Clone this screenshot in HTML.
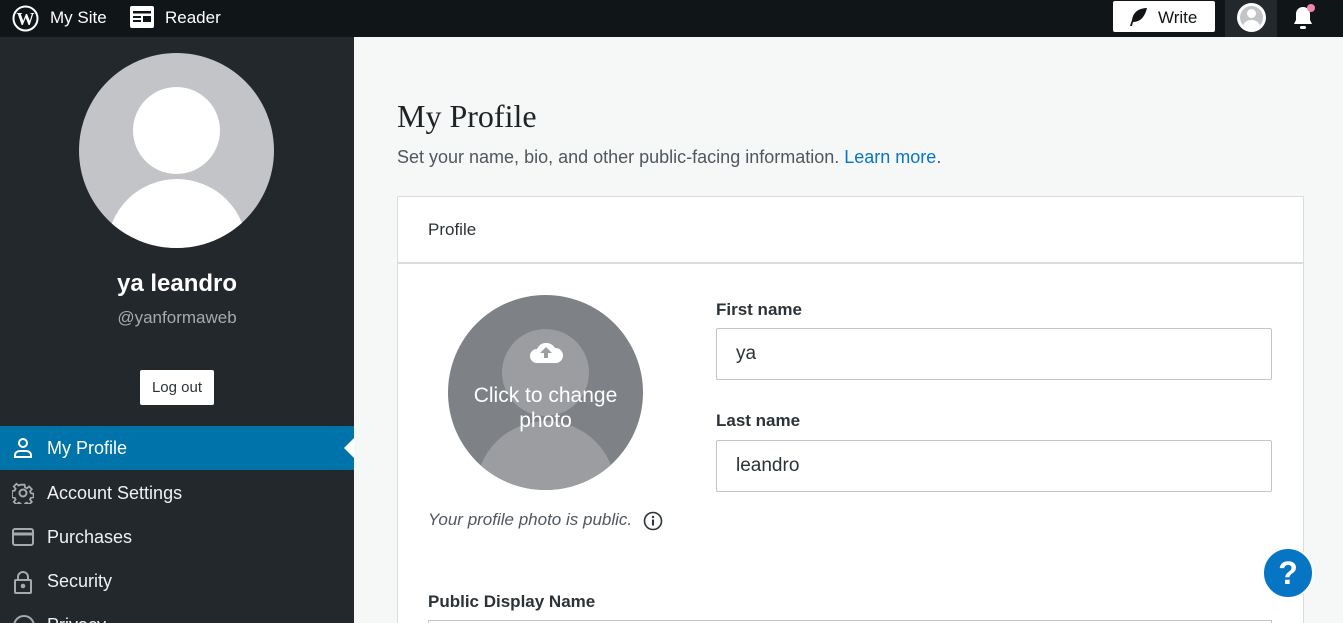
<!DOCTYPE html>
<html><head><style>
*{box-sizing:border-box;margin:0;padding:0}
html,body{width:1343px;height:623px;overflow:hidden}
body{font-family:"Liberation Sans",sans-serif;background:#f6f7f7;position:relative}
.top{position:absolute;left:0;top:0;width:1343px;height:37px;background:#101517;color:#fff;font-size:17px}
.side{position:absolute;left:0;top:37px;width:354px;height:586px;background:#23282d;color:#fff;overflow:hidden}
.t{position:absolute;white-space:nowrap}
.nav{position:absolute;left:0;width:354px;height:44px;font-size:18px;color:#f0f0f1}
.nav span{position:absolute;left:47px;top:12px}
.nav svg{position:absolute;left:12px;top:11px}
input{position:absolute;border:1px solid #c3c4c7;border-radius:2px;background:#fff;font-family:inherit;font-size:19px;padding-left:19px;color:#2c3338}
</style></head><body>
<div class="top">
<svg style="position:absolute;left:12px;top:5px" width="27" height="27" viewBox="0 0 27 27"><circle cx="13.5" cy="13.5" r="12" fill="none" stroke="#fff" stroke-width="2"/><text x="13.5" y="20" text-anchor="middle" font-family="Liberation Serif" font-weight="bold" font-size="18" fill="#fff">W</text></svg>
<span class="t" style="left:50px;top:8px">My Site</span>
<svg style="position:absolute;left:130px;top:6px" width="24" height="22"><rect x="0" y="0" width="24" height="22" rx="2" fill="#fff"/><rect x="3" y="5" width="18" height="2.5" fill="#101517"/><rect x="3" y="10" width="8" height="2" fill="#101517"/><rect x="3" y="14" width="8" height="2" fill="#101517"/><rect x="13" y="10" width="8" height="6" fill="#101517"/></svg>
<span class="t" style="left:165px;top:8px">Reader</span>
<div style="position:absolute;left:1113px;top:1px;width:102px;height:31px;background:#fff;border-radius:2px"></div>
<svg style="position:absolute;left:1129px;top:7px" width="20" height="20" viewBox="0 0 20 20"><path d="M18 1C10 1 4 5 3 13L1 19h2l1-4c8 0 12-6 14-14z" fill="#101517"/></svg>
<span class="t" style="left:1158px;top:8px;color:#101517;font-size:17px">Write</span>
<div style="position:absolute;left:1225px;top:0;width:52px;height:37px;background:#23282d"></div>
<div style="position:absolute;left:1237px;top:3px;width:29px;height:29px;border-radius:50%;background:#fff;overflow:hidden"><div style="position:absolute;left:3px;top:3px;width:23px;height:23px;border-radius:50%;background:#c3c4c7;overflow:hidden"><div style="position:absolute;left:7px;top:3px;width:9px;height:9px;border-radius:50%;background:#fff"></div><div style="position:absolute;left:3px;top:14px;width:17px;height:14px;border-radius:50%;background:#fff"></div></div></div>
<svg style="position:absolute;left:1291px;top:4px" width="26" height="28" viewBox="0 0 26 28"><path d="M12 3c-4 0-7 3-7 7v6l-2 4h18l-2-4v-6c0-4-3-7-7-7z" fill="#fff"/><rect x="9" y="22" width="6" height="3" rx="1.5" fill="#fff"/><circle cx="20" cy="4" r="4" fill="#f186a8"/></svg>
</div>
<div class="side">
<div style="position:absolute;left:79px;top:16px;width:195px;height:195px;border-radius:50%;background:#c3c4c7;overflow:hidden"><div style="position:absolute;left:54px;top:34px;width:87px;height:87px;border-radius:50%;background:#fff"></div><div style="position:absolute;left:28px;top:126px;width:140px;height:140px;border-radius:50%;background:#fff"></div></div>
<div class="t" style="left:0;width:354px;text-align:center;top:233px;font-size:24px;font-weight:bold">ya leandro</div>
<div class="t" style="left:0;width:354px;text-align:center;top:271px;font-size:17px;color:#a7aaad">@yanformaweb</div>
<div style="position:absolute;left:140px;top:333px;width:74px;height:35px;background:#fff;border-radius:2px;color:#2c3338;font-size:15px;text-align:center;line-height:35px">Log out</div>
<div class="nav" style="top:389px;background:#0073aa"><svg width="22" height="22" viewBox="0 0 22 22" fill="none" stroke="#fff" stroke-width="2"><circle cx="11" cy="6" r="4"/><path d="M3 20v-2c0-2 2-4 5-4h6c3 0 5 2 5 4v2z"/></svg><span style="color:#fff">My Profile</span><div style="position:absolute;right:0;top:12px;border:10px solid transparent;border-right-color:#fff;border-left:0"></div></div>
<div class="nav" style="top:434px"><svg width="22" height="22" viewBox="0 0 22 22" fill="none" stroke="#a7aaad" stroke-width="2"><circle cx="11" cy="11" r="3.5"/><path d="M9 2h4l.5 3 2 1 2.5-2 3 3-2 2.5 1 2 3 .5v4l-3 .5-1 2 2 2.5-3 3-2.5-2-2 1-.5 3H9l-.5-3-2-1-2.5 2-3-3 2-2.5-1-2-3-.5V9l3-.5 1-2-2-2.5 3-3 2.5 2 2-1z" transform="scale(.9) translate(1 1)"/></svg><span>Account Settings</span></div>
<div class="nav" style="top:478px"><svg width="22" height="22" viewBox="0 0 22 22" fill="none" stroke="#a7aaad" stroke-width="2"><rect x="1" y="3" width="20" height="16" rx="2"/><path d="M1 8h20" stroke-width="3"/></svg><span>Purchases</span></div>
<div class="nav" style="top:522px"><svg width="22" height="24" viewBox="0 0 22 24" fill="none" stroke="#a7aaad" stroke-width="2"><rect x="3" y="10" width="16" height="13" rx="1"/><path d="M6 10V7a5 5 0 0110 0v3"/><circle cx="11" cy="16" r="1.3" fill="#a7aaad"/></svg><span>Security</span></div>
<div class="nav" style="top:566px"><svg width="24" height="24"><circle cx="12" cy="12" r="10" fill="none" stroke="#a7aaad" stroke-width="2"/></svg><span>Privacy</span></div>
</div>
<div class="t" style="left:397px;top:98px;font-family:'Liberation Serif',serif;font-size:32px;color:#1d2327">My Profile</div>
<div class="t" style="left:397px;top:147px;font-size:18px;color:#50575e">Set your name, bio, and other public-facing information. <span style="color:#0675c4">Learn more</span>.</div>
<div style="position:absolute;left:397px;top:196px;width:907px;height:440px;background:#fff;border:1px solid #dcdcde">
<div style="height:67px;border-bottom:2px solid #dcdcde;padding:23px 0 0 30px;font-size:17px;color:#2c3338">Profile</div>
</div>
<div style="position:absolute;left:448px;top:295px;width:195px;height:195px;border-radius:50%;background:#7e8185;overflow:hidden"><div style="position:absolute;left:54px;top:34px;width:87px;height:87px;border-radius:50%;background:#9b9da1"></div><div style="position:absolute;left:28px;top:126px;width:140px;height:140px;border-radius:50%;background:#9b9da1"></div>
<svg style="position:absolute;left:81px;top:44px" width="34" height="26" viewBox="0 0 34 26"><path d="M8 24a7 7 0 010-14 10 10 0 0118-1 7 7 0 011 15z" fill="#fff"/><path d="M17 8l-6 6h4v5h4v-5h4z" fill="#9b9da1"/></svg>
<div style="position:absolute;left:0;width:195px;top:88px;text-align:center;color:#fff;font-size:21px;line-height:25px">Click to change<br>photo</div></div>
<div class="t" style="left:428px;top:510px;font-style:italic;font-size:17px;color:#50575e">Your profile photo is public.</div>
<svg style="position:absolute;left:643px;top:511px" width="20" height="20"><circle cx="10" cy="10" r="8.5" fill="none" stroke="#2c3338" stroke-width="1.6"/><rect x="9" y="8.5" width="2" height="6" fill="#2c3338"/><circle cx="10" cy="6" r="1.2" fill="#2c3338"/></svg>
<div class="t" style="left:716px;top:300px;font-size:17px;font-weight:bold;color:#2c3338">First name</div>
<input style="left:716px;top:328px;width:556px;height:52px" value="ya">
<div class="t" style="left:716px;top:411px;font-size:17px;font-weight:bold;color:#2c3338">Last name</div>
<input style="left:716px;top:440px;width:556px;height:52px" value="leandro">
<div class="t" style="left:428px;top:592px;font-size:17px;font-weight:bold;color:#2c3338">Public Display Name</div>
<div style="position:absolute;left:428px;top:620px;width:844px;height:10px;border:1px solid #c3c4c7"></div>
<div style="position:absolute;left:1262px;top:547px;width:52px;height:52px;border-radius:50%;background:#0675c4;border:2px solid #fff;color:#fff;font-size:32px;font-weight:bold;text-align:center;line-height:48px">?</div>
</body></html>
